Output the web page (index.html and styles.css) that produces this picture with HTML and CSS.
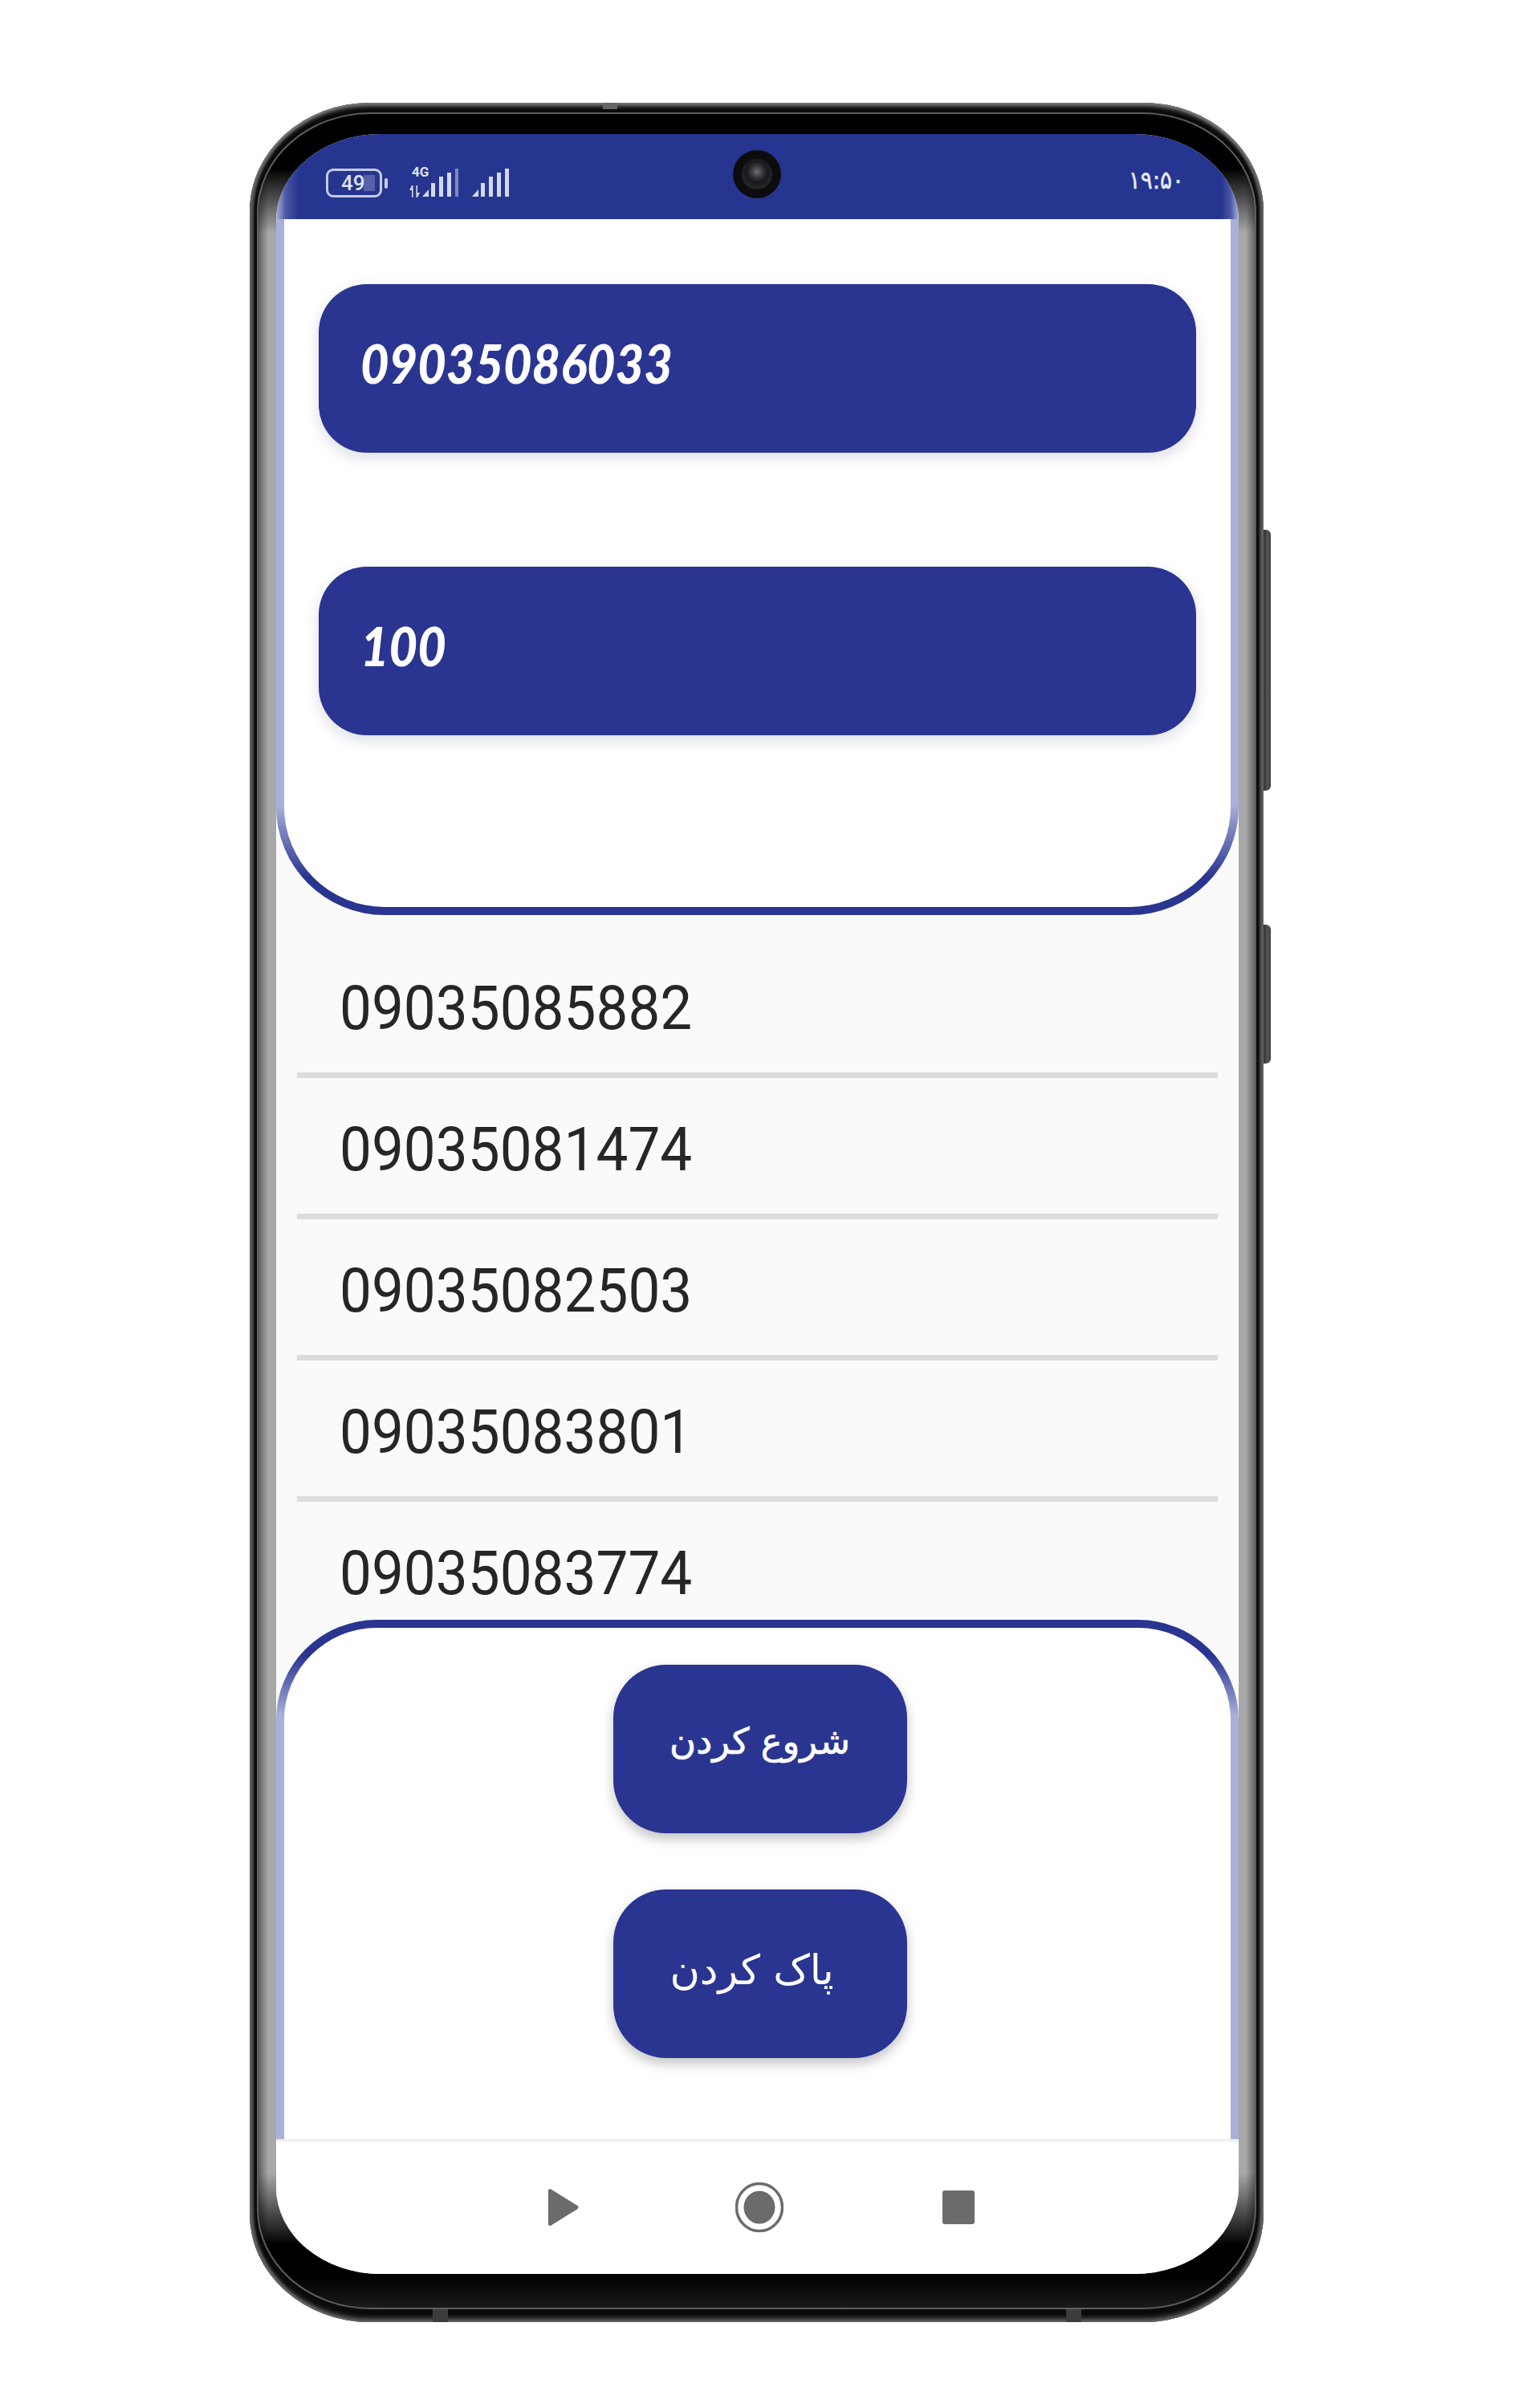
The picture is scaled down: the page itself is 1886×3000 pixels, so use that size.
FILE: index.html
```html
<!DOCTYPE html>
<html lang="fa">
<head>
<meta charset="utf-8">
<title>Phone numbers</title>
<link rel="stylesheet" href="styles.css">
</head>
<body>
<div class="phone">
  <span class="side-key key-power"></span>
  <span class="side-key key-volume"></span>
  <span class="seam seam-top"></span>
  <span class="seam seam-bl"></span>
  <span class="seam seam-br"></span>
  <div class="bezel">
    <div class="screen">
      <header class="status">
        <div class="status-left">
          <div class="battery">
            <div class="battery-body"><span class="battery-fill"></span><span class="battery-num">49</span></div>
            <span class="battery-nub"></span>
          </div>
          <div class="net">
            <span class="net-label">4G</span>
            <svg class="arrows" width="13" height="15" viewBox="0 0 13 15"><path class="glyph" d="M3 0h1.600v15H3V6H0zM8.400 0H10v9h3l-3 6H8.400z"/></svg>
          </div>
          <svg class="signal" width="46" height="35" viewBox="0 0 46 35"><path class="glyph" d="M0 35 8 26v9zM11 18h5v17h-5zM21 10h5v25h-5zM31 5h5v30h-5z"/><rect class="glyph-faint" x="41" width="4" height="35"/></svg>
          <svg class="signal signal-b" width="46" height="35" viewBox="0 0 46 35"><path class="glyph" d="M0 35 8 26v9zM11 18h5v17h-5zM21 10h5v25h-5zM31 5h5v30h-5zM41 0h5v35h-5z"/></svg>
        </div>
        <span class="clock">۱۹:۵۰</span>
      </header>

      <section class="panel-top">
        <div class="field"><span class="field-text">09035086033</span></div>
        <div class="field"><span class="field-text">100</span></div>
      </section>

      <ul class="numbers">
        <li class="number"><span class="number-text">09035085882</span></li>
        <li class="number"><span class="number-text">09035081474</span></li>
        <li class="number"><span class="number-text">09035082503</span></li>
        <li class="number"><span class="number-text">09035083801</span></li>
        <li class="number"><span class="number-text">09035083774</span></li>
      </ul>

      <section class="panel-bottom">
        <button class="action action-start" dir="rtl">شروع کردن</button>
        <button class="action action-clear" dir="rtl">پاک کردن</button>
      </section>

      <nav class="navbar">
        <svg class="nav-play" width="38" height="46" viewBox="0 0 38 46"><path d="M2 0c-1 0-2 1-2 2v42c0 1 1 2 2 2 .6 0 1-.2 1.500-.6L36.500 25c1.400-1 1.400-3 0-4L3.500.6C3 .2 2.600 0 2 0z"/></svg>
        <svg class="nav-home" width="60" height="62" viewBox="0 0 60 62"><ellipse class="ring" cx="30" cy="31" rx="28.500" ry="29.500"/><ellipse cx="30" cy="31" rx="19.500" ry="20.500"/></svg>
        <span class="nav-recent"></span>
      </nav>
    </div>
  </div>
  <div class="camera"><span class="camera-lens"></span></div>
</div>
</body>
</html>
```

FILE: styles.css
```css
* { box-sizing: border-box; }

html, body { margin: 0; background: #fff; }

body { padding-top: 128px; height: 3000px; overflow: hidden; }

.phone {
  position: relative;
  width: 1263px;
  height: 2765px;
  margin-left: 311px;
  padding: 12px 9px 16px;
  border-radius: 150px / 135px;
  background: #0a0a0a;
  box-shadow: inset 0 5px 5px -1px #808080, inset 0 -5px 6px -1px #6f6f6f, inset 6px 0 3px -1px #505050, inset -6px 0 3px -1px #505050;
}

.side-key {
  position: absolute;
  right: -9px;
  width: 9px;
  border-radius: 0 6px 6px 0;
  background: linear-gradient(to right, #333, #555 60%, #3a3a3a);
}
.key-power { top: 532px; height: 325px; }
.key-volume { top: 1024px; height: 173px; }

.seam { position: absolute; background: #3c3c3c; }
.seam-top { top: 0; left: 440px; width: 18px; height: 8px; background: #666; }
.seam-bl { bottom: 0; left: 228px; width: 19px; height: 16px; }
.seam-br { bottom: 0; left: 1017px; width: 19px; height: 16px; }

.bezel {
  height: 100%;
  padding: 27px 22px 44px 24px;
  border-radius: 142px / 125px;
  outline: 2px solid #5e5e5e;
  outline-offset: -2px;
  background:
    linear-gradient(to bottom, #000 0, #000 70px, rgba(0,0,0,0) 150px),
    linear-gradient(to top, #1c1c1c 0, #000 40px, #000 80px, rgba(0,0,0,0) 170px),
    linear-gradient(to right, #1c1c1c 0, #666 3px, #a8a8a8 14px, #a8a8a8 1232px, #666 1243px, #1c1c1c 100%);
}

.screen {
  display: flex;
  flex-direction: column;
  height: 100%;
  overflow: hidden;
  border-radius: 130px / 108px;
  background: #fafafa;
}

/* Status bar */
.status {
  display: flex;
  flex: none;
  justify-content: space-between;
  align-items: flex-start;
  height: 106px;
  padding: 43px 68px 0 62px;
  background: linear-gradient(to right, #a9b0d9 0, #4a57a4 12px, #26358f 28px, #26358f calc(100% - 22px), #4a57a4 calc(100% - 10px), #a9b0d9 100%);
}
.status-left { display: flex; align-items: flex-start; }

.battery { display: flex; align-items: center; width: 77px; }
.battery-body {
  position: relative;
  display: flex;
  align-items: center;
  width: 70px;
  height: 36px;
  padding-left: 16px;
  border: 3px solid #c6cbe8;
  border-radius: 9px;
}
.battery-fill {
  position: absolute;
  top: 5px;
  bottom: 5px;
  left: 44px;
  width: 14px;
  background: #5562ab;
}
.battery-num {
  position: relative;
  font: 500 26px/1 Roboto, "Liberation Sans", sans-serif;
  color: #dfe2f3;
}
.battery-nub {
  width: 4px;
  height: 13px;
  margin-left: 3px;
  border-radius: 2px;
  background: #c6cbe8;
}

.net { position: relative; width: 16px; height: 36px; margin-left: 27px; }
.net-label {
  position: absolute;
  top: -4px;
  left: 3px;
  font: 700 17px/1 Roboto, "Liberation Sans", sans-serif;
  color: #dfe2f3;
}
.arrows { position: absolute; top: 21px; left: 0; }

.signal { margin-left: 0; }
.signal-b { margin-left: 16px; }

.glyph { fill: #d4d8ee; }
.glyph-faint { fill: #7f89c2; }

.clock {
  font: 400 31px/1 "DejaVu Sans", sans-serif;
  color: #e8eaf6;
  margin-top: -1px;
  -webkit-text-stroke: .5px #e8eaf6;
  transform: scaleX(.9);
  transform-origin: right center;
}

/* Panels */
.panel-top {
  display: flex;
  flex: none;
  flex-direction: column;
  gap: 142px;
  height: 867px;
  padding: 81px 43px 0;
  border: solid transparent;
  border-width: 0 10px 10px;
  border-radius: 0 0 135px 135px;
  background:
    linear-gradient(#fff, #fff) padding-box,
    linear-gradient(to bottom, #a9b0d9 0, #a9b0d9 730px, #2a3591 820px) border-box;
}

.field {
  display: flex;
  flex: none;
  align-items: center;
  height: 210px;
  padding: 0 0 12px 52px;
  border-radius: 60px;
  background: #2a3591;
  box-shadow: 0 6px 18px rgba(30, 35, 90, .16);
}
.field-text {
  font: italic 900 66px/1 Lato, "Liberation Sans", sans-serif;
  color: #fff;
  transform: scaleX(.93);
  transform-origin: left center;
}

.numbers {
  flex: 1;
  min-height: 0;
  margin: 0;
  padding: 27px 26px 0;
  overflow: hidden;
  list-style: none;
}
.number {
  display: flex;
  align-items: center;
  height: 176px;
  padding: 8px 0 0 53px;
  border-bottom: 7px solid #dcdcdc;
}
.number-text {
  font: 400 76px/1 Roboto, "Liberation Sans", sans-serif;
  color: #262626;
  transform: scaleX(.935);
  transform-origin: left center;
}

.panel-bottom {
  display: flex;
  flex: none;
  flex-direction: column;
  align-items: center;
  gap: 70px;
  height: 647px;
  padding: 46px 0 0 6px;
  border: solid transparent;
  border-width: 10px 10px 0;
  border-radius: 125px 125px 0 0;
  background:
    linear-gradient(#fff, #fff) padding-box,
    linear-gradient(to bottom, #2a3591 0, #2a3591 45px, #a9b0d9 120px) border-box;
}

.action {
  flex: none;
  width: 366px;
  height: 210px;
  padding: 0 0 20px;
  border: 0;
  border-radius: 66px;
  background: #2a3591;
  box-shadow: 0 7px 15px rgba(0, 0, 0, .24);
  font-family: "DejaVu Sans", sans-serif;
  font-weight: 400;
  color: #fff;
}
.action-start {
  font-size: 45px;
  line-height: 1;
  -webkit-text-stroke: .7px #fff;
}
.action-clear {
  padding: 0 20px 10px 0;
  font-size: 51px;
  line-height: 1;
}

/* Navigation bar */
.navbar {
  position: relative;
  flex: none;
  height: 168px;
  border-top: 3px solid #eeeeee;
  background: #fff;
}
.nav-play, .nav-home, .nav-recent { position: absolute; }
.nav-play { top: 59px; left: 339px; fill: #6b6b6b; }
.nav-home { top: 51px; left: 572px; fill: #6b6b6b; }
.ring { fill: none; stroke: #6b6b6b; stroke-width: 3.500; }
.nav-recent {
  top: 61px;
  left: 830px;
  width: 40px;
  height: 42px;
  border-radius: 3px;
  background: #6b6b6b;
}

.camera {
  position: absolute;
  top: 59px;
  left: 602px;
  display: flex;
  align-items: center;
  justify-content: center;
  width: 60px;
  height: 60px;
  border-radius: 50%;
  background: #0c0c0e;
}
.camera-lens {
  width: 38px;
  height: 38px;
  border-radius: 50%;
  background: radial-gradient(circle at 50% 42%, #6d7075 0, #3c3e42 22%, #17181a 45%, #26272a 70%, #111 100%);
}
```
